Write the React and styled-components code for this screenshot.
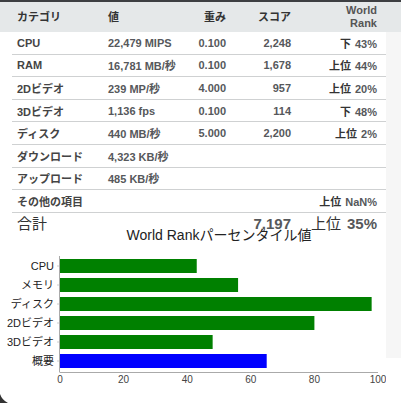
import React from 'react';
import styled, { createGlobalStyle } from 'styled-components';

const GlobalStyle = createGlobalStyle`
	html, body {
		margin: 0;
		padding: 0;
		background: #fff;
	}
	body {
		font-family: 'Liberation Sans', Arial, 'Noto Sans CJK JP', sans-serif;
		overflow: hidden;
	}
`;

const COLS = '91px 70px 48px 65px 86px';

const Page = styled.div`
	position: relative;
	width: 401px;
	height: 403px;
	overflow: hidden;
	border-top: 2px solid #3d3f42;
	box-sizing: border-box;
`;

const HeaderBar = styled.div`
	background: #e5e8e9;
	height: 30px;
	display: flex;
	align-items: center;
`;

const Grid = styled.div`
	display: grid;
	grid-template-columns: ${COLS};
	align-items: center;
	margin-left: 12px;
	width: 374px;
	box-sizing: border-box;
	padding-left: 5px;
`;

const HeadCell = styled.div`
	font-size: 11px;
	font-weight: bold;
	color: ${(p) => (p.$dark ? '#333' : '#555')};
	text-align: ${(p) => (p.$right ? 'right' : 'left')};
	line-height: 13px;
`;

const Body = styled.div`
	display: flex;
	align-items: flex-start;
`;

const Main = styled.div`
	width: 386px;
	flex: none;
`;

const Gutter = styled.div`
	width: 15px;
	height: 326px;
	background: #f6f6f6;
`;

const Row = styled(Grid)`
	height: 22.6px;
	border-bottom: 1px solid #cfd1d2;
`;

const Cell = styled.div`
	font-size: 11px;
	font-weight: bold;
	color: ${(p) => (p.$cat ? '#444' : '#56585b')};
	text-align: ${(p) => (p.$right ? 'right' : 'left')};
	white-space: nowrap;
`;

const Rank = styled.span`
	color: #333;
	margin-right: 4px;
`;

const TotalRow = styled(Grid)`
	height: 14px;
	padding-top: 3px;
	align-items: start;
`;

const TotalCell = styled.div`
	font-size: 15px;
	font-weight: ${(p) => (p.$bold ? 'bold' : 'normal')};
	color: ${(p) => (p.$bold ? '#56585b' : '#333')};
	text-align: ${(p) => (p.$right ? 'right' : 'left')};
	white-space: nowrap;
	line-height: 16px;
`;

const TotalRank = styled.span`
	font-weight: normal;
	color: #333;
	margin-right: 6px;
`;

const ChartSvg = styled.svg`
	display: block;
	font-family: 'Liberation Sans', Arial, 'Noto Sans CJK JP', sans-serif;
`;

const Corner = styled.svg`
	position: absolute;
	left: 0;
	bottom: 0;
`;

const rows = [
	{ cat: 'CPU', value: '22,479 MIPS', weight: '0.100', score: '2,248', rank: '下', pct: '43%' },
	{ cat: 'RAM', value: '16,781 MB/秒', weight: '0.100', score: '1,678', rank: '上位', pct: '44%' },
	{ cat: '2Dビデオ', value: '239 MP/秒', weight: '4.000', score: '957', rank: '上位', pct: '20%' },
	{ cat: '3Dビデオ', value: '1,136 fps', weight: '0.100', score: '114', rank: '下', pct: '48%' },
	{ cat: 'ディスク', value: '440 MB/秒', weight: '5.000', score: '2,200', rank: '上位', pct: '2%' },
	{ cat: 'ダウンロード', value: '4,323 KB/秒' },
	{ cat: 'アップロード', value: '485 KB/秒' },
	{ cat: 'その他の項目', rank: '上位', pct: 'NaN%' },
];

const bars = [
	{ label: 'CPU', v: 43, color: '#008000' },
	{ label: 'メモリ', v: 56, color: '#008000' },
	{ label: 'ディスク', v: 98, color: '#008000' },
	{ label: '2Dビデオ', v: 80, color: '#008000' },
	{ label: '3Dビデオ', v: 48, color: '#008000' },
	{ label: '概要', v: 65, color: '#0000ff' },
];

function Chart() {
	const x0 = 60;
	const scale = 3.18;
	const top = 29;
	const axisY = 145;
	return (
		<ChartSvg width="386" height="176" viewBox="0 0 386 176">
			<text x="219" y="13" fontSize="14" fill="#222" textAnchor="middle">
				World Rankパーセンタイル値
			</text>
			{bars.map((b, i) => {
				const y = 32 + i * 19;
				return (
					<g key={b.label}>
						<rect x={x0} y={y} width={b.v * scale} height="14" fill={b.color} />
						<line x1="57" x2={x0} y1={y + 7} y2={y + 7} stroke="#ccc" />
						<text x="54" y={y + 11} fontSize="11" fill="#222" textAnchor="end">
							{b.label}
						</text>
					</g>
				);
			})}
			<line x1={x0 - 0.5} x2={x0 - 0.5} y1={top} y2={axisY} stroke="#aaa" />
			<line x1={x0 - 0.5} x2="378" y1={axisY + 0.5} y2={axisY + 0.5} stroke="#aaa" />
			{[0, 20, 40, 60, 80, 100].map((t) => (
				<text key={t} x={x0 + t * scale} y="156" fontSize="10" fill="#444" textAnchor="middle">
					{t}
				</text>
			))}
		</ChartSvg>
	);
}

export default function App() {
	return (
		<>
			<GlobalStyle />
			<Page>
				<HeaderBar>
					<Grid>
						<HeadCell $dark>カテゴリ</HeadCell>
						<HeadCell $dark>値</HeadCell>
						<HeadCell $dark $right>重み</HeadCell>
						<HeadCell $dark $right>スコア</HeadCell>
						<HeadCell $right>
							World
							<br />
							Rank
						</HeadCell>
					</Grid>
				</HeaderBar>
				<Body>
					<Main>
						{rows.map((r) => (
							<Row key={r.cat}>
								<Cell $cat>{r.cat}</Cell>
								<Cell>{r.value}</Cell>
								<Cell $right>{r.weight}</Cell>
								<Cell $right>{r.score}</Cell>
								<Cell $right>
									{r.rank && <Rank>{r.rank}</Rank>}
									{r.pct}
								</Cell>
							</Row>
						))}
						<TotalRow>
							<TotalCell>合計</TotalCell>
							<TotalCell />
							<TotalCell />
							<TotalCell $bold $right>7,197</TotalCell>
							<TotalCell $bold $right>
								<TotalRank>上位</TotalRank>35%
							</TotalCell>
						</TotalRow>
						<Chart />
					</Main>
					<Gutter />
				</Body>
				<Corner width="8" height="9" viewBox="0 0 8 9">
					<path d="M0 0 Q2 6 8 9 L0 9 Z" fill="#333" />
				</Corner>
			</Page>
		</>
	);
}
